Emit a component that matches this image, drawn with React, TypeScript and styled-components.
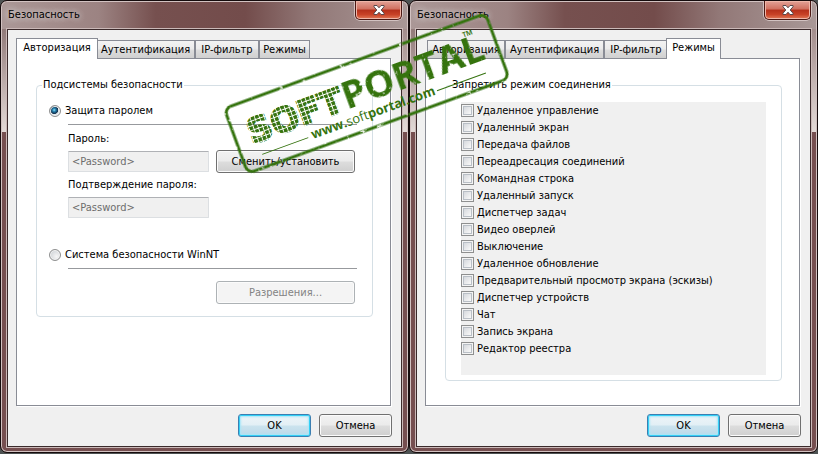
import React from "react";
import styled, { createGlobalStyle, css } from "styled-components";

const GlobalStyle = createGlobalStyle`
  * { box-sizing: border-box; }
  body {
    margin: 0;
    background: #4d5252;
    color: #000;
    font: 11px/14px Tahoma, "DejaVu Sans Condensed", "Noto Sans", sans-serif;
  }
  button, input { font: inherit; color: inherit; margin: 0; }
`;

const Desktop = styled.main`
  display: grid;
  grid-template-columns: 1fr 1fr;
  min-height: 100vh;
  padding-bottom: 1px;
  position: relative;
  overflow: hidden;
`;

const WindowFrame = styled.section`
  display: flex;
  flex-direction: column;
  padding: 0 6px 5px;
  border: 1px solid #150b0c;
  border-radius: 7px;
  box-shadow: inset 0 0 0 1px #d2c2c1;
  background:
    linear-gradient(#917a79, #e3dad7) left 0 top 28px / 8px 103px no-repeat,
    linear-gradient(#a38d8c, #e3dad7) right 0 top 28px / 8px 103px no-repeat,
    linear-gradient(90deg, #ab9897, #9c8382 24%, #76504f 38%, #734c4b 60%, #927877 76%, #a99897) 0 0 / 100% 28px no-repeat,
    #764f50;
`;

const TitleBar = styled.header`
  display: flex;
  align-items: flex-start;
  justify-content: space-between;
  height: 28px;
`;

const Title = styled.h1`
  margin: 7px 0 0 1px;
  font-size: 11px;
  line-height: 14px;
  font-weight: normal;
  text-shadow: 0 0 6px #fff8, 0 0 8px #fff8, 0 0 10px #fff6;
`;

const CloseButton = styled.button`
  display: flex;
  align-items: center;
  justify-content: center;
  width: 47px;
  height: 19px;
  padding: 0 0 1px;
  border: 1px solid #4b1813;
  border-top: 0;
  border-radius: 0 0 5px 5px;
  box-shadow: inset 0 0 0 1px #efb6a8, 0 1px 0 #d2c2c1, 1px 0 0 #d2c2c1, -1px 0 0 #d2c2c1;
  background: linear-gradient(#e3a297, #d0705f 45%, #b5301b 50%, #c84227 75%, #e17a58);
`;

const Client = styled.div`
  display: flex;
  flex: 1;
  flex-direction: column;
  padding: 8px 9px 9px 8px;
  border: 1px solid #3b2a2b;
  box-shadow: 0 0 0 1px #cbb9b8;
  background: #f0f0f0;
`;

const TabStrip = styled.div`
  display: flex;
  align-items: flex-end;
  height: 20px;
  padding-left: 2px;
`;

const Tab = styled.button<{ $width: number; $active: boolean }>`
  width: ${(p) => p.$width}px;
  height: 18px;
  padding: 0;
  border: 1px solid #898c95;
  border-bottom: 0;
  background: linear-gradient(#f3f3f3, #ebebeb 48%, #dddddd 52%, #d0d0d0);
  text-align: center;
  white-space: nowrap;
  ${(p) =>
    p.$active &&
    css`
      position: relative;
      z-index: 1;
      width: ${p.$width + 4}px;
      height: 21px;
      margin: 0 -2px -1px;
      padding-bottom: 2px;
      background: #fff;
    `}
`;

const Panel = styled.div`
  flex: 1;
  margin-right: 1px;
  padding: 19px 17px 16px 19px;
  border: 1px solid #898c95;
  box-shadow: 1px 1px 0 #fff;
  background: #fff;
`;

const Group = styled.fieldset`
  min-width: 0;
  margin: 0;
  padding: 0;
  border: 1px solid #d5dfe5;
  border-radius: 4px;
`;

const Legend = styled.legend`
  margin-left: 5px;
  padding: 0 1px;
`;

const AuthBody = styled.div`
  padding: 12px 15px 12px 12px;
`;

const RadioLabel = styled.label`
  display: flex;
  align-items: center;
  gap: 4px;
  height: 14px;
`;

const Radio = styled.input`
  appearance: none;
  width: 12px;
  height: 12px;
  border: 1px solid #8e8f8f;
  border-radius: 50%;
  box-shadow: inset 0 0 0 1px #f4f4f4;
  background: radial-gradient(circle at 65% 65%, #f6f6f6, #c4c9ce);
  &:checked {
    background: radial-gradient(circle at 42% 40%, #9be3f7 0, #2787b4 18%, #153f61 38%, #173650 44%, #dfe6ea 52%);
  }
`;

const Section = styled.div`
  display: flex;
  flex-direction: column;
  gap: 5px;
  margin: 6px 0 0 19px;
  padding-top: 7px;
  border-top: 1px solid #97999d;
`;

const PasswordSection = styled(Section)`
  margin-bottom: 29px;
`;

const PermissionSection = styled(Section)`
  align-items: flex-end;
  padding-top: 12px;
  padding-right: 2px;
`;

const Field = styled.div`
  display: flex;
  flex-direction: column;
  gap: 4px;
`;

const FieldRow = styled.div`
  display: flex;
  align-items: center;
  justify-content: space-between;
  gap: 7px;
  height: 23px;
  padding-right: 2px;
`;

const TextInput = styled.input`
  flex: 0 0 141px;
  width: 141px;
  height: 21px;
  padding: 0 3px;
  border: 1px solid #dcdfe2;
  border-top-color: #afb1b5;
  border-radius: 1px;
  background: #f0f0f0;
  color: #6d6d6d;
`;

const PushButton = styled.button<{ $wide?: boolean; $primary?: boolean }>`
  width: ${(p) => (p.$wide ? 139 : 73)}px;
  height: 23px;
  padding: 0;
  border: 1px solid #707070;
  border-radius: 3px;
  box-shadow: inset 0 0 0 1px #fbfbfb;
  background: linear-gradient(#f2f2f2, #ebebeb 49%, #dddddd 51%, #cfcfcf);
  white-space: nowrap;
  ${(p) =>
    p.$primary &&
    css`
      border-color: #3c7fb1;
      box-shadow: inset 0 0 0 1px #34d0f6, inset 0 0 2px 2px #a9e6f8;
      background: linear-gradient(#eef5f8, #e2eff5 49%, #cbe3ee 51%, #bcd9e8);
    `}
  &:disabled {
    border-color: #adb2b5;
    background: #f4f4f4;
    color: #838383;
  }
`;

const Actions = styled.footer`
  display: flex;
  justify-content: flex-end;
  gap: 8px;
  padding-top: 8px;
`;

const ModeList = styled.ul`
  margin: 10px 15px 5px;
  padding: 0 0 18px;
  background: #f0f0f0;
  list-style: none;
`;

const ModeLabel = styled.label`
  display: flex;
  align-items: center;
  gap: 3px;
  height: 17px;
`;

const CheckBox = styled.input`
  appearance: none;
  width: 13px;
  height: 13px;
  border: 1px solid #8e8f8f;
  box-shadow: inset 0 0 0 1px #f4f4f4, inset 0 0 0 2px #b9bfc6;
  background: linear-gradient(135deg, #cbcfd5, #f6f6f6 75%);
  &:checked { background: #3c7fb1; }
`;

const Stamp = styled.svg`
  position: absolute;
  left: 210px;
  top: 0;
  pointer-events: none;
`;

const TABS = [
  { label: "Авторизация", width: 78 },
  { label: "Аутентификация", width: 99 },
  { label: "IP-фильтр", width: 64 },
  { label: "Режимы", width: 51 },
];

const MODES = [
  "Удаленное управление",
  "Удаленный экран",
  "Передача файлов",
  "Переадресация соединений",
  "Командная строка",
  "Удаленный запуск",
  "Диспетчер задач",
  "Видео оверлей",
  "Выключение",
  "Удаленное обновление",
  "Предварительный просмотр экрана (эскизы)",
  "Диспетчер устройств",
  "Чат",
  "Запись экрана",
  "Редактор реестра",
];

function SecurityWindow({ active, children }: { active: string; children: React.ReactNode }) {
  return (
    <WindowFrame>
      <TitleBar>
        <Title>Безопасность</Title>
        <CloseButton aria-label="Закрыть">
          <svg width="12" height="10" viewBox="0 0 12 10">
            <path
              d="M1 .5h3l2 2.3L8 .5h3v1.3L8.200 5 11 8.200v1.300H8L6 7.200 4 9.500H1V8.200L3.800 5 1 1.800z"
              fill="#fff"
              stroke="#58494c"
              strokeWidth="1"
            />
          </svg>
        </CloseButton>
      </TitleBar>
      <Client>
        <TabStrip role="tablist">
          {TABS.map((tab) => (
            <Tab
              key={tab.label}
              role="tab"
              aria-selected={tab.label === active}
              $active={tab.label === active}
              $width={tab.width}
            >
              {tab.label}
            </Tab>
          ))}
        </TabStrip>
        <Panel role="tabpanel">{children}</Panel>
        <Actions>
          <PushButton $primary>OK</PushButton>
          <PushButton>Отмена</PushButton>
        </Actions>
      </Client>
    </WindowFrame>
  );
}

function SoftPortalStamp() {
  return (
    <Stamp width="310" height="196" viewBox="210 0 310 196" aria-hidden="true">
      <defs>
        <pattern id="dots" width="4.500" height="4.500" patternUnits="userSpaceOnUse">
          <rect width="3.500" height="3.500" fill="#35730f" />
        </pattern>
        <filter id="worn" x="-5%" y="-10%" width="110%" height="120%">
          <feTurbulence type="fractalNoise" baseFrequency="0.22" numOctaves="3" seed="7" result="noise" />
          <feColorMatrix in="noise" type="matrix" values="0 0 0 0 0  0 0 0 0 0  0 0 0 0 0  0 0 0 -8 6.300" result="wear" />
          <feComposite in="SourceGraphic" in2="wear" operator="in" />
        </filter>
      </defs>
      <g transform="translate(223 108) rotate(-20)" fill="#35730f">
        <text x="15" y="44" fontFamily="DejaVu Sans" fontWeight="700" fontSize="34" fill="url(#dots)" stroke="url(#dots)" strokeWidth="2">
          SOFT
        </text>
        <g filter="url(#worn)">
          <rect x="1" y="1" width="278" height="69" rx="7" fill="none" stroke="#35730f" strokeWidth="3" />
          <text x="116" y="44" fontFamily="Open Sans" fontWeight="700" fontSize="38">
            PORTAL
          </text>
        </g>
        <text x="250" y="21" fontFamily="Open Sans" fontWeight="700" fontSize="14">
          ™
        </text>
        <path d="M21 57h49M207 57h52" stroke="#35730f" strokeWidth="1" />
        <text x="74" y="60" fontFamily="Open Sans" fontWeight="700" fontSize="13">
          www.<tspan fontWeight="400">soft</tspan>portal.com
        </text>
      </g>
    </Stamp>
  );
}

export default function App() {
  return (
    <>
      <GlobalStyle />
      <Desktop>
        <SecurityWindow active="Авторизация">
          <Group>
            <Legend>Подсистемы безопасности</Legend>
            <AuthBody>
              <RadioLabel>
                <Radio type="radio" name="subsystem" defaultChecked />
                Защита паролем
              </RadioLabel>
              <PasswordSection>
                <Field>
                  <label htmlFor="password">Пароль:</label>
                  <FieldRow>
                    <TextInput id="password" defaultValue="<Password>" disabled />
                    <PushButton $wide>Сменить/установить</PushButton>
                  </FieldRow>
                </Field>
                <Field>
                  <label htmlFor="confirm">Подтверждение пароля:</label>
                  <FieldRow>
                    <TextInput id="confirm" defaultValue="<Password>" disabled />
                  </FieldRow>
                </Field>
              </PasswordSection>
              <RadioLabel>
                <Radio type="radio" name="subsystem" />
                Система безопасности WinNT
              </RadioLabel>
              <PermissionSection>
                <PushButton $wide disabled>
                  Разрешения...
                </PushButton>
              </PermissionSection>
            </AuthBody>
          </Group>
        </SecurityWindow>
        <SecurityWindow active="Режимы">
          <Group>
            <Legend>Запретить режим соединения</Legend>
            <ModeList>
              {MODES.map((mode) => (
                <li key={mode}>
                  <ModeLabel>
                    <CheckBox type="checkbox" />
                    {mode}
                  </ModeLabel>
                </li>
              ))}
            </ModeList>
          </Group>
        </SecurityWindow>
        <SoftPortalStamp />
      </Desktop>
    </>
  );
}
